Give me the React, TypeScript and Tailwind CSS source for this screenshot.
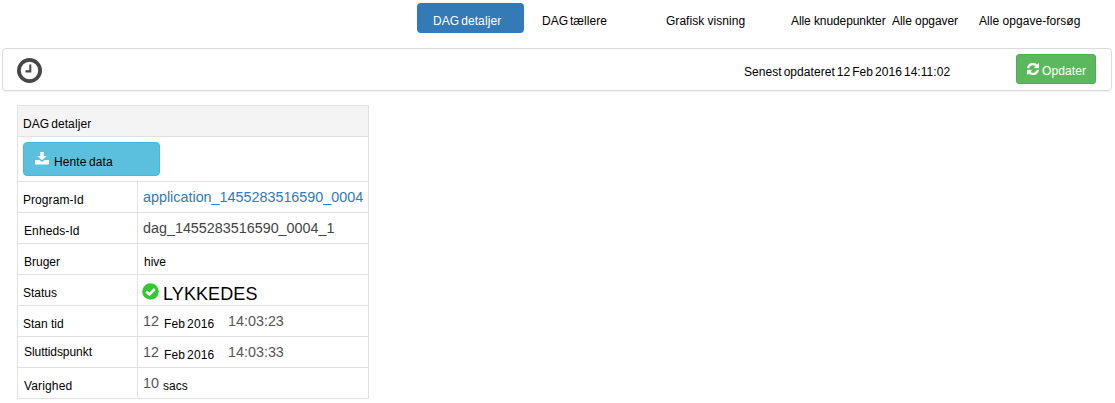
import type { ReactNode } from "react";

function T({ c, children }: { c: string; children: ReactNode }) {
  return <span className={"block shrink-0 whitespace-pre text-[12px] leading-[14px] " + c}>{children}</span>;
}

function V({ c, children }: { c: string; children: ReactNode }) {
  return <span className={"block shrink-0 whitespace-pre text-[14.35px] leading-[16px] " + c}>{children}</span>;
}

function Row({ h, label, children }: { h: string; label: ReactNode; children: ReactNode }) {
  return (
    <div className={"flex border-b border-[#e2e2e2] " + h}>
      <div className="w-[120px] shrink-0 border-r border-[#e2e2e2]">{label}</div>
      <div className="flex grow items-start">{children}</div>
    </div>
  );
}

function Clock() {
  return (
    <svg className="ml-[14px] mt-[9px] h-[25px] w-[25px] shrink-0" viewBox="0 0 1536 1536" fill="#474747">
      <path d="M880 400v490H520V760h235V400z" />
      <path fillRule="evenodd" d="M768 0a768 768 0 1 0 0 1536a768 768 0 1 0 0-1536zM768 232a536 536 0 1 1 0 1072a536 536 0 1 1 0-1072z" />
    </svg>
  );
}

function Refresh() {
  return (
    <svg className="ml-[10px] mt-[8px] h-[12px] w-[12px] shrink-0" viewBox="0 0 1536 1536" fill="#fff" stroke="#fff" strokeWidth="50">
      <path d="M1511 928q0 5-1 7q-64 268-268 434.500T764 1536q-146 0-282.500-55T238 1324l-129 129q-19 19-45 19t-45-19t-19-45V960q0-26 19-45t45-19h448q26 0 45 19t19 45t-19 45l-137 137q71 66 161 102t187 36q134 0 250-65t186-179q11-17 53-117q8-23 30-23h192q13 0 22.500 9.500t9.500 22.500zM1536 128v448q0 26-19 45t-45 19h-448q-26 0-45-19t-19-45t19-45l138-138q-148-137-349-137q-134 0-250 65T332 500q-11 17-53 117q-8 23-30 23H50q-13 0-22.500-9.500T18 608v-7q65-268 270-434.500T768 0q146 0 284 55.500T1297 212l130-129q19-19 45-19t45 19t19 45z" />
    </svg>
  );
}

function Download() {
  return (
    <svg className="ml-[11px] mt-[9px] h-[13px] w-[14px] shrink-0" viewBox="0 0 14 13" fill="#fff">
      <path d="M5.300 0h3.400v4h2.900L7 8.200L2.400 4h2.900z" />
      <path d="M.6 8h3.700L7 10L9.700 8h3.700q.6 0 .6.600v3.200q0 .6-.6.600H.6q-.6 0-.6-.6V8.600q0-.6.600-.6z" />
      <path d="M9.700 10.500h1v.8h-1zM11.700 10.500h1v.8h-1z" fill="#a5dcec" />
    </svg>
  );
}

function Check() {
  return (
    <svg className="ml-[4px] mt-[8px] h-[17px] w-[17px] shrink-0" viewBox="0 0 17 17">
      <circle cx="8.500" cy="8.500" r="8.300" fill="#32c832" />
      <path d="M4.300 8.500L7.400 11.500L12.800 6" fill="none" stroke="#fff" strokeWidth="2.500" />
    </svg>
  );
}

export default function App() {
  return (
    <div className="h-[403px] w-[1115px] overflow-hidden bg-white font-['Liberation_Sans',Arial,sans-serif] text-black">
      <nav className="flex h-[48px] items-start pl-[417px] pt-[3px]">
        <div className="h-[30px] w-[107px] shrink-0 rounded-[4px] bg-[#337ab7] pl-[16px] pt-[11px]">
          <T c="text-white tracking-[0.1px] [word-spacing:-1.6px]">DAG detaljer</T>
        </div>
        <T c="ml-[18px] mt-[11px] w-[124px] tracking-[0.06px] [word-spacing:-1.6px]">DAG tællere</T>
        <T c="mt-[11px] w-[125px] tracking-[0.03px]">Grafisk visning</T>
        <T c="mt-[11px] w-[101px] tracking-[-0.09px]">Alle knudepunkter</T>
        <T c="mt-[11px] w-[87px] tracking-[-0.06px]">Alle opgaver</T>
        <T c="mt-[11px] tracking-[0.04px]">Alle opgave-forsøg</T>
      </nav>
      <div className="ml-[2px] flex h-[43px] w-[1110px] items-start rounded-[4px] border border-[#dadada] shadow-[0_1px_2px_rgba(0,0,0,0.06)]">
        <Clock />
        <T c="ml-[702px] mt-[16px] w-[272px] tracking-[0.05px] [word-spacing:-1.4px]">Senest opdateret 12 Feb 2016 14:11:02</T>
        <div className="mt-[5px] flex h-[30px] w-[80px] items-start rounded-[3px] border border-[#4cae4c] bg-[#5cb85c]">
          <Refresh />
          <T c="ml-[3px] mt-[9px] text-white tracking-[0.1px]">Opdater</T>
        </div>
      </div>
      <div className="ml-[17px] mt-[14px] w-[352px] border-x border-t border-[#e2e2e2]">
        <div className="h-[31px] border-b border-[#e2e2e2] bg-[#f4f4f4] pl-[5px] pt-[11px]">
          <T c="tracking-[0.1px] [word-spacing:-1.6px]">DAG detaljer</T>
        </div>
        <div className="h-[45px] border-b border-[#e2e2e2] pl-[5px] pt-[5px]">
          <div className="flex h-[34px] w-[137px] items-start rounded-[4px] border border-[#46b8da] bg-[#5bc0de]">
            <Download />
            <T c="ml-[5px] mt-[12px] tracking-[0.1px] [word-spacing:-1px]">Hente data</T>
          </div>
        </div>
        <Row h="h-[31px]" label={<T c="pl-[5px] pt-[11px] tracking-[0.06px]">Program-Id</T>}>
          <V c="pl-[5px] pt-[7px] text-[#337ab7]">application_1455283516590_0004</V>
        </Row>
        <Row h="h-[31px]" label={<T c="pl-[6px] pt-[11px] tracking-[0.1px]">Enheds-Id</T>}>
          <V c="pl-[5px] pt-[7px] text-[#444]">dag_1455283516590_0004_1</V>
        </Row>
        <Row h="h-[31px]" label={<T c="pl-[6px] pt-[11px]">Bruger</T>}>
          <T c="pl-[6px] pt-[11px]">hive</T>
        </Row>
        <Row h="h-[31px]" label={<T c="pl-[5px] pt-[11px]">Status</T>}>
          <Check />
          <span className="ml-[4px] mt-[9px] text-[18px] leading-[20px] tracking-[0.1px]">LYKKEDES</span>
        </Row>
        <Row h="h-[31px]" label={<T c="pl-[5px] pt-[11px]">Stan tid</T>}>
          <V c="w-[26px] pl-[5px] pt-[7px] text-[#555]">12</V>
          <T c="w-[64px] pt-[11px] tracking-[0.1px] [word-spacing:-1.3px]">Feb 2016</T>
          <V c="pt-[7px] text-[#555]">14:03:23</V>
        </Row>
        <Row h="h-[31px]" label={<T c="pl-[6px] pt-[8px] tracking-[-0.06px]">Sluttidspunkt</T>}>
          <V c="w-[26px] pl-[5px] pt-[7px] text-[#555]">12</V>
          <T c="w-[64px] pt-[11px] tracking-[0.1px] [word-spacing:-1.3px]">Feb 2016</T>
          <V c="pt-[7px] text-[#555]">14:03:33</V>
        </Row>
        <Row h="h-[31px]" label={<T c="pl-[6px] pt-[11px] tracking-[0.15px]">Varighed</T>}>
          <V c="w-[25px] pl-[5px] pt-[7px] text-[#555]">10</V>
          <T c="pt-[11px]">sacs</T>
        </Row>
      </div>
    </div>
  );
}
